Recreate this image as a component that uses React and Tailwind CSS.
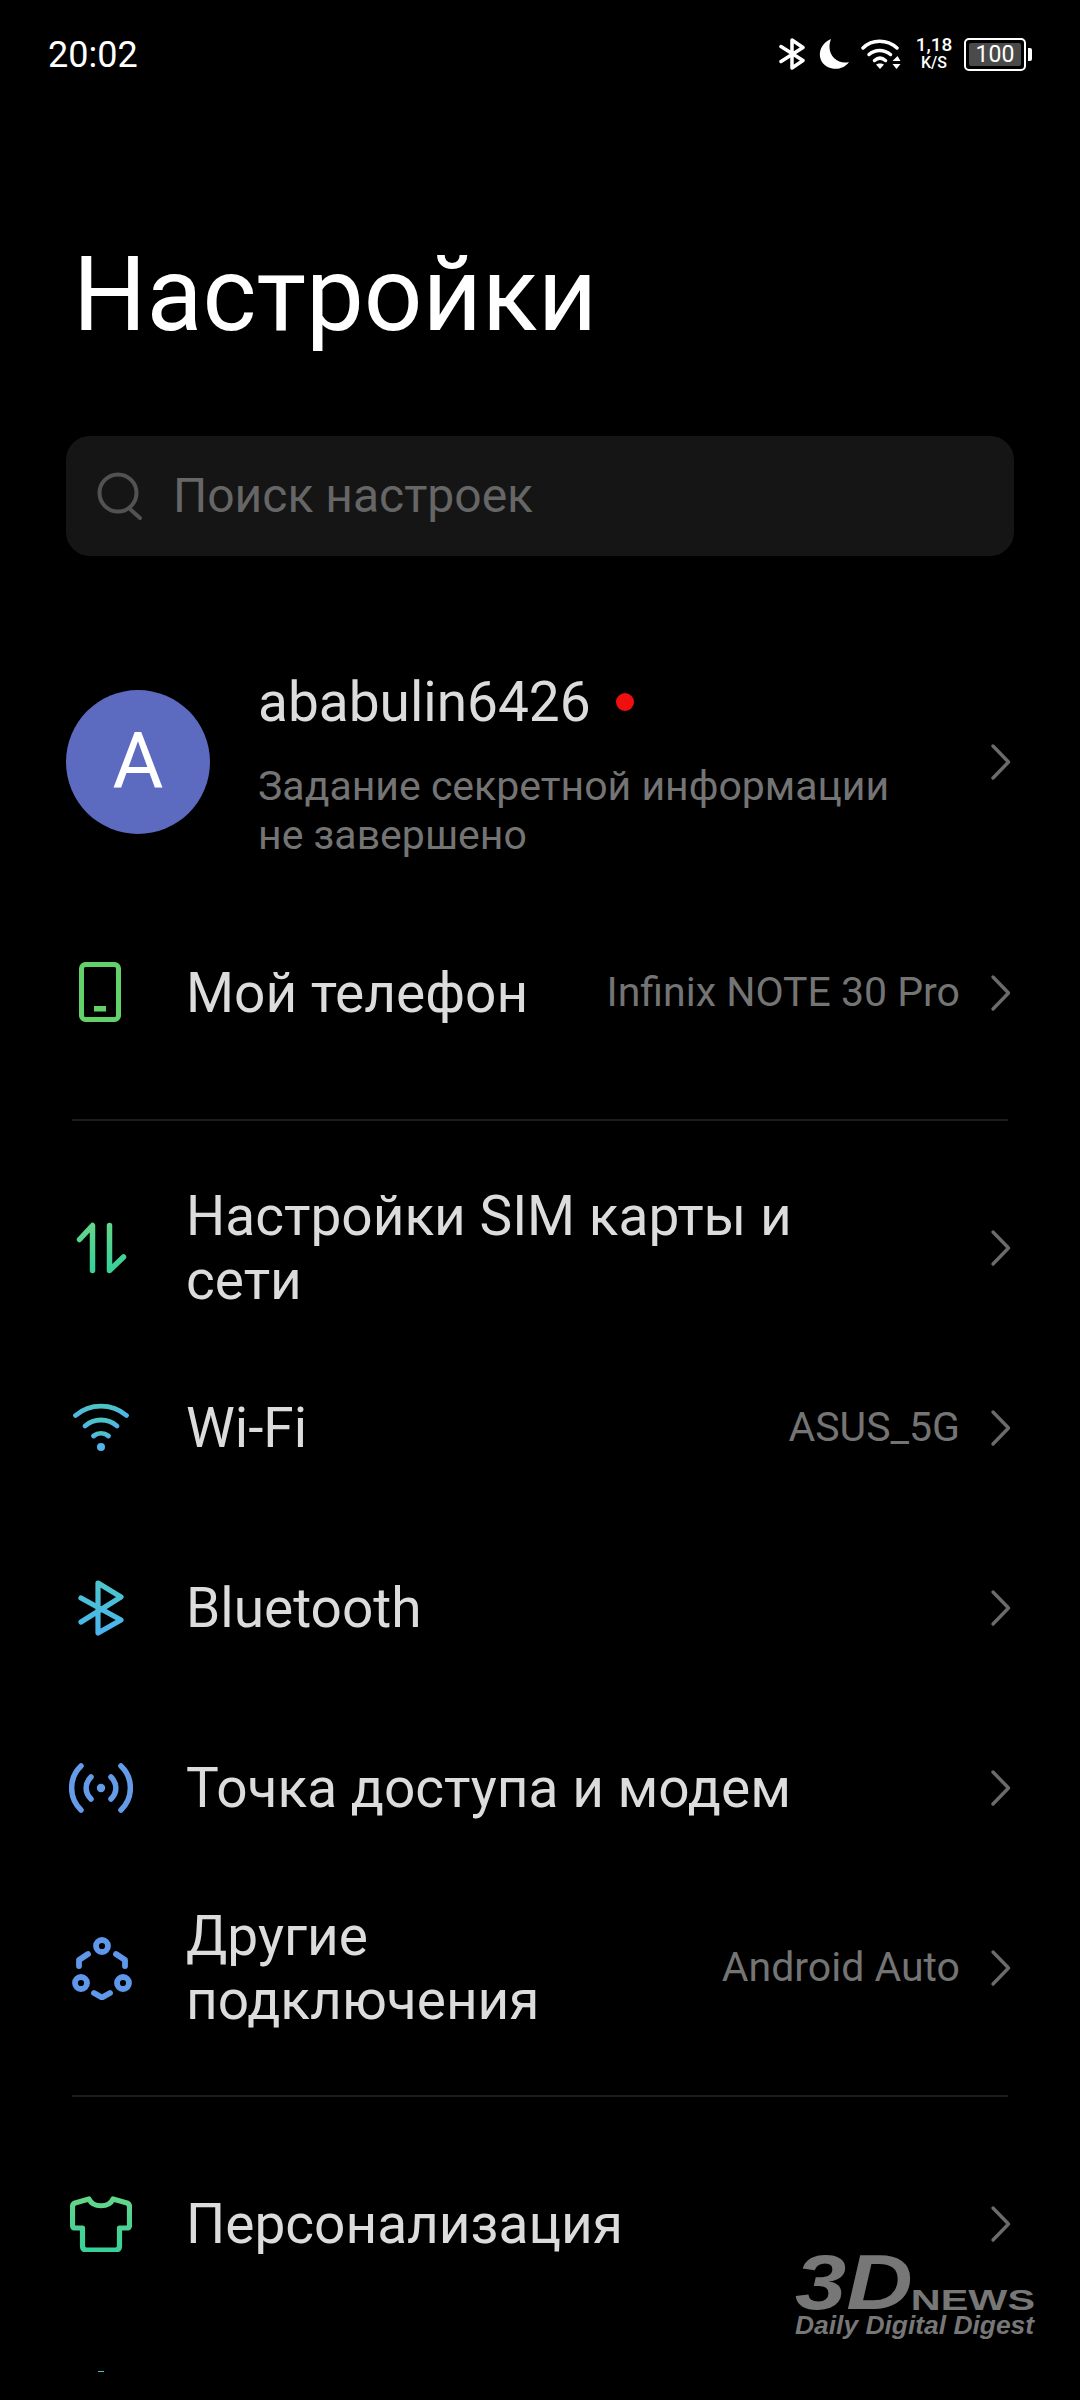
const Chevron = () => (
  <svg width="22" height="38" viewBox="0 0 22 38" fill="none" className="shrink-0">
    <path d="M3 3l15.500 16L3 35" stroke="#6b6b6b" strokeWidth="3.400" strokeLinecap="round" strokeLinejoin="round" />
  </svg>
);

const Gradient = ({ id, from, to }) => (
  <defs>
    <linearGradient id={id} x1="0" y1="0" x2="0" y2="1">
      <stop offset="0" stopColor={from} />
      <stop offset="1" stopColor={to} />
    </linearGradient>
  </defs>
);

const PhoneIcon = () => (
  <svg width="44" height="62" viewBox="0 0 44 62" fill="none">
    <rect x="2.500" y="2.500" width="37" height="55" rx="4" stroke="#62d268" strokeWidth="5" />
    <rect x="15" y="44" width="12" height="5.500" fill="#62d268" />
  </svg>
);

const SimIcon = () => (
  <svg width="54" height="54" viewBox="0 0 54 54" fill="none">
    <Gradient id="simGrad" from="#62d68a" to="#38d09a" />
    <path d="M5.500 18.500L18.500 4.500V49.500M35.500 4.500V49.500L49.500 36" stroke="url(#simGrad)" strokeWidth="5.500" strokeLinecap="round" strokeLinejoin="round" />
  </svg>
);

const WifiIcon = () => (
  <svg width="56" height="50" viewBox="0 0 56 50" fill="none">
    <Gradient id="wifiGrad" from="#4cc4c4" to="#52b4ea" />
    <path d="M2.500 12.500C17 0 39 0 53.500 12.500" stroke="url(#wifiGrad)" strokeWidth="4.800" strokeLinecap="round" />
    <path d="M12 23C21 15 35 15 44 23" stroke="url(#wifiGrad)" strokeWidth="4.800" strokeLinecap="round" />
    <path d="M20.500 33C25 29.500 31 29.500 35.500 33" stroke="url(#wifiGrad)" strokeWidth="4.800" strokeLinecap="round" />
    <circle cx="28" cy="44" r="4" fill="#52b4ea" />
  </svg>
);

const BluetoothIcon = () => (
  <svg width="46" height="56" viewBox="0 0 46 56" fill="none">
    <Gradient id="btGrad" from="#4cc6cc" to="#4ab4f0" />
    <path d="M3 18L43 40L20 53V3L43 17L3 42" stroke="url(#btGrad)" strokeWidth="5.200" strokeLinecap="round" strokeLinejoin="round" />
  </svg>
);

const HotspotIcon = () => (
  <svg width="64" height="50" viewBox="0 0 64 50" fill="none" stroke="#659cea" strokeWidth="5.500" strokeLinecap="round">
    <path d="M12 3C-0.500 15 -0.500 35 12 47" />
    <path d="M52 3C64.500 15 64.500 35 52 47" />
    <path d="M22 14C15.500 20.500 15.500 29.500 22 36" />
    <path d="M42 14C48.500 20.500 48.500 29.500 42 36" />
    <circle cx="32" cy="25" r="4.200" fill="#659cea" stroke="none" />
  </svg>
);

const ConnectIcon = () => (
  <svg width="62" height="64" viewBox="0 0 62 64" fill="none" stroke="#5f97ea" strokeWidth="5.800" strokeLinecap="round" strokeLinejoin="round">
    <circle cx="32" cy="10" r="6" />
    <circle cx="11" cy="47" r="6" />
    <circle cx="53" cy="47" r="6" />
    <path d="M9 30V24L18 18" />
    <path d="M55 30V24L46 18" />
    <path d="M24 57L32 61.500L40 57" />
  </svg>
);

const ShirtIcon = () => (
  <svg width="62" height="56" viewBox="0 0 62 56" fill="none">
    <Gradient id="shirtGrad" from="#62d68a" to="#38d09a" />
    <path d="M19 3L5 7Q2.500 8 2.500 11V29Q2.500 32 5.500 32H12.500V50Q12.500 54 16.500 54H45.500Q49.500 54 49.500 50V32H56.500Q59.500 32 59.500 29V11Q59.500 8 57 7L43 3C39 12 23 12 19 3Z" stroke="url(#shirtGrad)" strokeWidth="5.200" strokeLinejoin="round" />
  </svg>
);

const SettingRow = ({ icon, value, height = 'h-[180px]', children }) => (
  <div className={`flex items-center pl-[65px] pr-[68px] ${height}`}>
    <div className="flex w-[72px] shrink-0 items-center justify-center">{icon}</div>
    <div className="ml-[49px] flex-1 text-[55px] leading-[64px] text-[#dcdcdc]">{children}</div>
    {value && <span className="mr-[30px] text-[41px] text-[#747474]">{value}</span>}
    <Chevron />
  </div>
);

const Divider = () => <div className="mx-[72px] h-[2px] bg-[#1c1c1c]" />;

const StatusBar = () => (
  <div className="flex h-[108px] items-center justify-between pl-[48px] pr-[48px] text-white">
    <span className="pt-[2px] text-[36px]">20:02</span>
    <div className="flex items-center">
      <svg width="26" height="32" viewBox="0 0 26 32" fill="none" stroke="#fff" strokeWidth="3.500" strokeLinecap="round" strokeLinejoin="round">
        <path d="M2 8.500L24 22.500L13 30V2L24 9.500L2 23.500" />
      </svg>
      <svg width="32" height="32" viewBox="0 0 32 32" className="ml-[13px]">
        <path d="M13 1C3 5 -1 16 4 24C9 32 24 34 31 24C20 27 7 17 13 1Z" fill="#fff" />
      </svg>
      <svg width="40" height="32" viewBox="0 0 40 32" fill="none" className="ml-[11px]">
        <path d="M2 10C11 1 26 1 36 10" stroke="#fff" strokeWidth="3.500" strokeLinecap="round" />
        <path d="M8 16.500C14 11 23 11 29.500 16.500" stroke="#fff" strokeWidth="3.500" strokeLinecap="round" />
        <path d="M13.500 22.500C17 19.500 21 19.500 24.500 22.500" stroke="#fff" strokeWidth="3.500" strokeLinecap="round" />
        <path d="M19 31L15 26.500C17 25 21 25 23 26.500Z" fill="#fff" />
        <path d="M37 18L40 23H32Z" transform="translate(-0.500 0)" fill="#fff" />
        <path d="M32 26H40L36 31Z" transform="translate(-0.500 0)" fill="#fff" />
      </svg>
      <div className="ml-[14px] flex w-[38px] flex-col items-center text-[19px] font-medium leading-[18px]">
        <span>1,18</span>
        <span className="text-[16px]">K/S</span>
      </div>
      <div className="ml-[11px] flex h-[33px] w-[62px] items-center justify-center rounded-[5px] border-2 border-white p-[3px]">
        <span className="flex h-full w-full items-center justify-center rounded-[2px] bg-[#4a4a4a] text-[23px] leading-none">100</span>
      </div>
      <div className="ml-[2px] h-[13px] w-[4px] rounded-r-[2px] bg-white" />
    </div>
  </div>
);

export default function App() {
  return (
    <div className="relative h-[2400px] w-[1080px] overflow-hidden bg-black font-['Roboto',sans-serif]">
      <StatusBar />

      <h1 className="mt-[124px] pl-[73px] text-[103px] font-normal leading-[126px] text-white">Настройки</h1>

      <div className="mx-[66px] mt-[78px] flex h-[120px] items-center rounded-[24px] bg-[#151515] pl-[31px]">
        <svg width="46" height="48" viewBox="0 0 46 48" fill="none" stroke="#525252" strokeWidth="4" strokeLinecap="round">
          <circle cx="21" cy="21" r="18.500" />
          <path d="M34 38L43 46" />
        </svg>
        <span className="ml-[30px] text-[48px] text-[#666666]">Поиск настроек</span>
      </div>

      {/* Профиль */}
      <div className="mt-[134px] flex h-[144px] items-center pl-[66px] pr-[68px]">
        <div className="flex h-[144px] w-[144px] shrink-0 items-center justify-center rounded-full bg-[#5c6bc0] text-[78px] leading-none text-white">
          A
        </div>
        <div className="ml-[48px] flex-1 pt-[8px]">
          <div className="flex items-center">
            <span className="text-[55px] leading-[60px] text-[#dcdcdc]">ababulin6426</span>
            <span className="ml-[25px] h-[18px] w-[18px] rounded-full bg-[#f00f0f]" />
          </div>
          <p className="mt-[30px] text-[41px] leading-[49px] text-[#747474]">
            Задание секретной информации
            <br />
            не завершено
          </p>
        </div>
        <Chevron />
      </div>

      <div className="mt-[74px]">
        <SettingRow icon={<PhoneIcon />} value="Infinix NOTE 30 Pro" height="h-[170px]">
          Мой телефон
        </SettingRow>
      </div>

      <div className="mt-[41px]">
        <Divider />
      </div>

      <div className="mt-[37px]">
        <SettingRow icon={<SimIcon />}>
          Настройки SIM карты и
          <br />
          сети
        </SettingRow>
        <SettingRow icon={<WifiIcon />} value="ASUS_5G">
          Wi-Fi
        </SettingRow>
        <SettingRow icon={<BluetoothIcon />}>Bluetooth</SettingRow>
        <SettingRow icon={<HotspotIcon />}>Точка доступа и модем</SettingRow>
        <SettingRow icon={<ConnectIcon />} value="Android Auto">
          Другие
          <br />
          подключения
        </SettingRow>
      </div>

      <div className="mt-[37px]">
        <Divider />
      </div>

      <div className="mt-[37px]">
        <SettingRow icon={<ShirtIcon />}>Персонализация</SettingRow>
      </div>

      {/* Верх следующей иконки, обрезан */}
      <div className="ml-[98px] mt-[57px] h-[1px] w-[6px] bg-[#4cc4c4]" />

      {/* Водяной знак */}
      <div className="absolute left-[795px] top-[2252px] h-[88px] w-[244px] text-[#777777] font-['Liberation_Sans',sans-serif]">
        <span className="absolute left-0 top-0 origin-left scale-x-[1.18] text-[78px] font-bold italic leading-[60px]">3D</span>
        <span className="absolute right-[4px] top-[34px] origin-right scale-x-[1.38] text-[30px] font-bold leading-[28px]">NEWS</span>
        <span className="absolute left-0 top-[60px] whitespace-nowrap text-[26.400px] font-bold italic leading-[26px]">Daily Digital Digest</span>
      </div>
    </div>
  );
}
